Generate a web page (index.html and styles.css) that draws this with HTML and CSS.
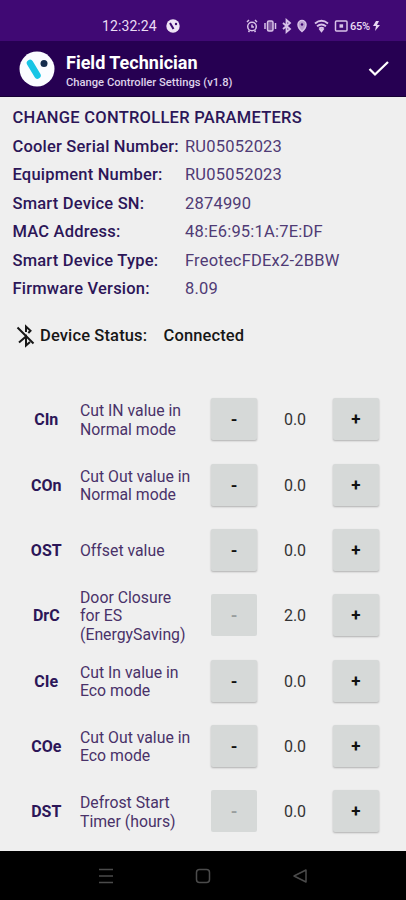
FILE: index.html
```html
<!DOCTYPE html>
<html lang="en">
<head>
<meta charset="utf-8">
<title>Field Technician</title>
<link rel="stylesheet" href="styles.css">
</head>
<body>
<div class="status">
  <span class="clock">12:32:24</span>
  <svg class="mini-logo" width="14" height="14" viewBox="0 0 14 14"><circle cx="7" cy="7" r="6.7" fill="#eee3f5"/><path d="M4 4l3.500 6" stroke="#3a086e" stroke-width="2"/><circle cx="10" cy="5" r="1.2" fill="#3a086e"/></svg>
  <svg class="icons" width="102" height="16" viewBox="0 0 102 16" fill="none" stroke="#d8c2e8" stroke-width="1.5">
    <circle cx="6" cy="8.500" r="4.300"/><path d="M1 4l2-2M11 4L9 2M2.500 14l1-1.500M9.500 14l-1-1.500M6 6.500v2.500h2"/>
    <rect x="21.500" y="3" width="5.500" height="10" rx="1.500" fill="#7d549f"/><path d="M19 5v6M29.500 5v6"/>
    <path d="M37 5l7 6-3.500 3V2L44 5l-7 6" stroke-width="1.800"/>
    <path d="M56 13.500C53 11 52 9 52 6.500a4 4 0 0 1 8 0c0 2.500-1 4.500-4 7z" fill="#b99ccf"/><circle cx="56" cy="6.500" r="1.200" fill="#3f0974" stroke="none"/>
    <path d="M69 5.500c4-3.300 9-3.300 13 0M71 8.200c3-2.300 6-2.300 9 0M73.200 10.500c1.500-1 3-1 4.600 0" stroke-width="1.900"/><path d="M75.500 13.500l-1.500-2h3z" fill="#d8c2e8"/>
    <rect x="89.500" y="3" width="11.500" height="10" rx="1"/><rect x="93.500" y="6.300" width="3.600" height="3.400" fill="#d8c2e8" stroke="none"/>
  </svg>
  <span class="battery">65%</span>
  <svg class="bolt" width="8" height="10" viewBox="0 0 8 10"><path d="M3 0L0 5h3L2 10l5-6H4l2-4z" fill="#e8d8f3"/></svg>
</div>
<header>
  <svg class="logo" width="36" height="36" viewBox="0 0 36 36"><circle cx="18" cy="18" r="17.500" fill="#fafcff"/><path d="M11 12l7.500 12.500" stroke="#18c5e5" stroke-width="6.500" stroke-linecap="round"/><circle cx="25" cy="12.500" r="3.500" fill="#142c4c"/></svg>
  <div class="heading"><h1>Field Technician</h1><p>Change Controller Settings (v1.8)</p></div>
  <svg class="check" width="22" height="18" viewBox="0 0 22 18"><path d="M1.500 9l5.500 5.500L20 2" fill="none" stroke="#fff" stroke-width="2.300"/></svg>
</header>
<main>
  <h2>CHANGE CONTROLLER PARAMETERS</h2>
  <dl>
    <dt>Cooler Serial Number:</dt><dd>RU05052023</dd>
    <dt>Equipment Number:</dt><dd>RU05052023</dd>
    <dt>Smart Device SN:</dt><dd>2874990</dd>
    <dt>MAC Address:</dt><dd>48:E6:95:1A:7E:DF</dd>
    <dt>Smart Device Type:</dt><dd>FreotecFDEx2-2BBW</dd>
    <dt>Firmware Version:</dt><dd>8.09</dd>
  </dl>
  <div class="device">
    <svg width="20" height="24" viewBox="0 0 20 24" fill="none" stroke="#171717" stroke-width="2"><path d="M1.500 3.500l16 16M10 8V2.500l4.500 4.200-2.200 2.300M3 18.500l7-6v9l4-3.600"/></svg>
    <span class="label">Device Status:</span><span>Connected</span>
  </div>
  <section class="params">
    <div class="row"><b>CIn</b><p>Cut IN value in<br>Normal mode</p><button>-</button><output>0.0</output><button>+</button></div>
    <div class="row"><b>COn</b><p>Cut Out value in<br>Normal mode</p><button>-</button><output>0.0</output><button>+</button></div>
    <div class="row"><b>OST</b><p>Offset value</p><button>-</button><output>0.0</output><button>+</button></div>
    <div class="row"><b>DrC</b><p>Door Closure<br>for ES<br>(EnergySaving)</p><button disabled>-</button><output>2.0</output><button>+</button></div>
    <div class="row"><b>CIe</b><p>Cut In value in<br>Eco mode</p><button>-</button><output>0.0</output><button>+</button></div>
    <div class="row"><b>COe</b><p>Cut Out value in<br>Eco mode</p><button>-</button><output>0.0</output><button>+</button></div>
    <div class="row"><b>DST</b><p>Defrost Start<br>Timer (hours)</p><button disabled>-</button><output>0.0</output><button>+</button></div>
  </section>
</main>
<nav>
  <svg width="16" height="16" viewBox="0 0 16 16"><path d="M1 1.500h14M1 8h14M1 14.500h14"/></svg>
  <svg width="16" height="16" viewBox="0 0 16 16"><rect x="1.500" y="1.500" width="13" height="13" rx="3"/></svg>
  <svg width="16" height="16" viewBox="0 0 16 16"><path d="M14 2v12L2 8z" stroke-linejoin="round"/></svg>
</nav>
</body>
</html>
```
FILE: styles.css
```css
* { box-sizing: border-box; margin: 0; padding: 0; }
body { width: 406px; height: 900px; display: flex; flex-direction: column; font-family: Roboto, sans-serif; background: #efefef; overflow: hidden; }
.status { height: 41px; background: #400974; display: flex; align-items: center; padding: 11px 0 0 102px; color: #eadcf4; }
.clock { width: 64px; font-size: 14px; letter-spacing: .1px; }
.icons { margin-left: 66px; }
.battery { margin-left: 2px; width: 23px; font-size: 11px; font-weight: 500; letter-spacing: -.2px; }
header { height: 56px; background: #260052; border-bottom: 1px solid #160034; display: flex; align-items: center; padding: 0 16px 0 19px; color: #fff; }
.heading { margin-left: 11px; flex: 1; padding-top: 6px; }
h1 { font-size: 18px; line-height: 22px; font-weight: 700; }
.heading p { font-size: 11.2px; line-height: 17px; font-weight: 500; color: #dfd3ea; }
.check { margin-top: 1px; }
main { height: 754px; padding-left: 12.5px; color: #2c1658; }
h2 { font-size: 16.5px; line-height: 28.5px; font-weight: 500; letter-spacing: .26px; padding-top: 7px; }
dl { display: grid; grid-template-columns: 172.5px 1fr; grid-auto-rows: 28.5px; font-size: 16.5px; line-height: 28.5px; letter-spacing: .2px; }
dt { font-weight: 500; white-space: nowrap; }
dd { color: #4f3b75; }
.device { margin-top: 20px; height: 24px; display: flex; align-items: center; font-size: 16.5px; font-weight: 500; letter-spacing: .13px; color: #171717; padding-left: 3.5px; }
.label { width: 123.5px; margin-left: 4px; }
.params { margin-top: 39px; }
.row { height: 65.35px; display: grid; grid-template-columns: 67.5px 131px 46px 76px 46px; align-items: center; font-size: 16px; color: #493269; }
.row b { text-align: center; font-weight: 700; color: #2c1658; padding-top: 1px; }
.row p { font-size: 15.8px; line-height: 18.5px; padding-top: 3px; }
.row output { text-align: center; color: #333; padding-top: 1px; }
button { height: 42px; border: 0; border-radius: 2px; background: #d6d9d8; box-shadow: 0 1px 2px #0004; font: 700 17px/42px Roboto, sans-serif; color: #111; }
button:disabled { color: #999e9e; box-shadow: none; }
nav { height: 49px; background: #000; display: flex; justify-content: center; align-items: center; gap: 81px; }
nav svg { fill: none; stroke: #4b4b4b; stroke-width: 1.5; }
```
